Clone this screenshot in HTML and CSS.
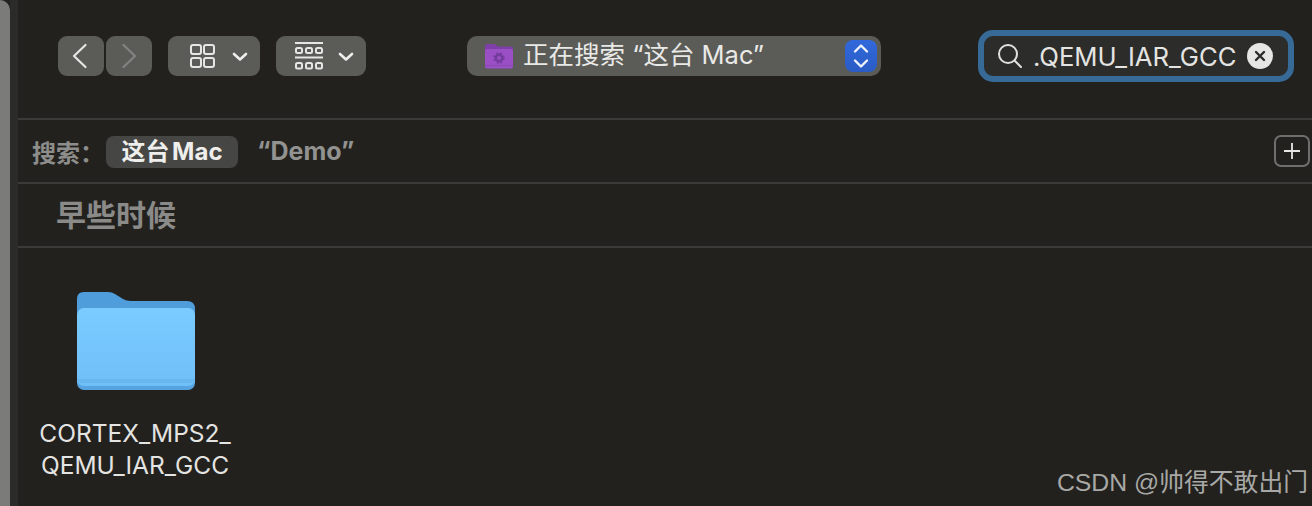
FILE: index.html
```html
<!DOCTYPE html>
<html lang="zh-CN">
<head>
<meta charset="utf-8">
<title>正在搜索 “这台 Mac”</title>
<link rel="stylesheet" href="styles.css">
</head>
<body>
<div class="window">
  <div class="edge"></div>
  <div class="gutter"></div>
  <main class="main">
    <header class="toolbar">
      <div class="nav">
        <button class="btn nav-btn"><svg class="back" width="18" height="26" viewBox="0 0 18 26"><path d="M14.500 2 L3 13 L14.500 24" fill="none" stroke="#e6e6e4" stroke-width="2.200" stroke-linecap="round" stroke-linejoin="round"/></svg></button>
        <button class="btn nav-btn"><svg width="18" height="26" viewBox="0 0 18 26"><path d="M3.500 2 L15 13 L3.500 24" fill="none" stroke="#838381" stroke-width="2.200" stroke-linecap="round" stroke-linejoin="round"/></svg></button>
      </div>
      <button class="btn view-btn">
        <svg class="grid-icon" width="26" height="26" viewBox="0 0 26 26"><g fill="none" stroke="#e6e6e4" stroke-width="2"><rect x="2" y="2" width="10" height="9" rx="2"/><rect x="15" y="2" width="10" height="9" rx="2"/><rect x="2" y="15" width="10" height="9" rx="2"/><rect x="15" y="15" width="10" height="9" rx="2"/></g></svg>
        <svg class="chev" width="16" height="10" viewBox="0 0 16 10"><path d="M2 2 L8 7.500 L14 2" fill="none" stroke="#eeeeec" stroke-width="2.600" stroke-linecap="round" stroke-linejoin="round"/></svg>
      </button>
      <button class="btn group-btn">
        <svg class="group-icon" width="29" height="28" viewBox="0 0 29 28"><g fill="none" stroke="#e6e6e4" stroke-width="2"><path d="M0 1 H28M0 15.500 H28"/><rect x="1" y="6" width="6" height="5" rx="1.500"/><rect x="11" y="6" width="6" height="5" rx="1.500"/><rect x="21" y="6" width="6" height="5" rx="1.500"/><rect x="1" y="21" width="6" height="5.500" rx="1.500"/><rect x="11" y="21" width="6" height="5.500" rx="1.500"/><rect x="21" y="21" width="6" height="5.500" rx="1.500"/></g></svg>
        <svg class="chev" width="16" height="10" viewBox="0 0 16 10"><path d="M2 2 L8 7.500 L14 2" fill="none" stroke="#eeeeec" stroke-width="2.600" stroke-linecap="round" stroke-linejoin="round"/></svg>
      </button>
      <div class="popup">
        <svg class="smart-folder" width="30" height="26" viewBox="0 0 30 26">
          <path d="M1 3 Q1 1 3 1 H10 Q11.500 1 13 2.500 L14 3.500 H27 Q29 3.500 29 5.500 V12 H1 Z" fill="#7e3fa8"/>
          <rect x="1" y="6" width="28" height="19.500" rx="2" fill="#9a4fc4"/>
          <rect x="1" y="22" width="28" height="1" fill="#8a48b4"/>
          <circle cx="15" cy="15" r="3.200" fill="none" stroke="#713a9b" stroke-width="2.400"/>
          <circle cx="15" cy="15" r="5" fill="none" stroke="#713a9b" stroke-width="1.400" stroke-dasharray="2 2"/>
        </svg>
        <span class="popup-label">正在搜索 “这台 Mac”</span>
        <span class="stepper">
          <svg width="18" height="30" viewBox="0 0 18 30"><g fill="none" stroke="#eef2fb" stroke-width="2.400" stroke-linecap="round" stroke-linejoin="round"><path d="M3 10.500 L9 4.500 L15 10.500"/><path d="M3 19.500 L9 25.500 L15 19.500"/></g></svg>
        </span>
      </div>
      <div class="search">
        <svg class="glass" width="26" height="26" viewBox="0 0 26 26"><g fill="none" stroke="#e0e0de" stroke-width="2"><circle cx="11" cy="11" r="9"/><path d="M17.500 17.500 L24 24" stroke-linecap="round"/></g></svg>
        <span class="search-text">.QEMU_IAR_GCC</span>
        <span class="clear"><svg width="12" height="12" viewBox="0 0 12 12"><path d="M2 2 L10 10M10 2 L2 10" stroke="#2b2b29" stroke-width="2.400" stroke-linecap="round"/></svg></span>
      </div>
    </header>
    <section class="scope">
      <span class="scope-label">搜索：</span>
      <span class="scope-on">这台 Mac</span>
      <span class="scope-off">“Demo”</span>
      <span class="add"><svg width="18" height="18" viewBox="0 0 18 18"><path d="M9 1 V17M1 9 H17" stroke="#e6e6e4" stroke-width="1.800"/></svg></span>
    </section>
    <section class="heading">早些时候</section>
    <section class="results">
      <figure class="item">
        <svg class="folder" width="120" height="100" viewBox="0 0 120 100">
          <defs>
            <linearGradient id="folderFace" x1="0" y1="0" x2="0" y2="1">
              <stop offset="0" stop-color="#7acbff"/>
              <stop offset="1" stop-color="#70c0f8"/>
            </linearGradient>
          </defs>
          <path d="M1 8 Q1 1 8 1 H32 Q36 1 39 3 L47 8 Q50 10 55 10 H111 Q119 10 119 18 V40 H1 Z" fill="#509ddc"/>
          <rect x="1" y="17" width="118" height="82" rx="7" fill="#55a3e0"/>
          <rect x="1" y="17" width="118" height="78" rx="7" fill="url(#folderFace)"/>
          <rect x="1" y="88" width="118" height="4" fill="#68b7f0"/>
        </svg>
        <figcaption class="name">CORTEX_MPS2_<br>QEMU_IAR_GCC</figcaption>
      </figure>
    </section>
  </main>
</div>
<div class="watermark">CSDN @帅得不敢出门</div>
</body>
</html>
```
FILE: styles.css
```css
* { box-sizing: border-box; }
html, body { margin: 0; height: 100%; overflow: hidden; background: #22211e; }
body {
  position: relative;
  font-family: Inter, "Noto Sans CJK SC", "Liberation Sans", sans-serif;
}
.window { display: flex; height: 506px; width: 1312px; }
.edge { width: 10px; background: #7b7b79; border-top-right-radius: 10px; }
.gutter { width: 8px; background: #2b2b29; }
.main { flex: 1; min-width: 0; display: flex; flex-direction: column; background: #22211e; }

.toolbar {
  height: 120px;
  flex: none;
  display: flex;
  align-items: flex-start;
  padding: 36px 0 0 40px;
  border-bottom: 2px solid #3a3a38;
}
.btn {
  height: 40px;
  padding: 0;
  border: 0;
  border-radius: 9px;
  background: #5b5c57;
  display: flex;
  align-items: center;
}
.nav { display: flex; gap: 2px; }
.nav-btn { width: 46px; justify-content: center; }
.back { margin-right: 2px; }
.view-btn { width: 92px; margin-left: 16px; padding-left: 21px; }
.group-btn { width: 90px; margin-left: 16px; padding-left: 19px; }
.view-btn .chev { margin-left: 17px; margin-top: 2px; }
.group-btn .chev { margin-left: 14px; margin-top: 2px; }

.popup {
  width: 414px;
  height: 40px;
  margin-left: 101px;
  border-radius: 10px;
  background: #5b5c57;
  display: flex;
  align-items: center;
  padding: 0 4px 0 17px;
}
.popup-label {
  margin-left: 9px;
  margin-top: -2px;
  color: #e9e9e7;
  font-size: 25.5px;
  line-height: 36px;
  white-space: nowrap;
}
.stepper {
  margin-left: auto;
  width: 32px;
  height: 32px;
  border-radius: 8px;
  background: linear-gradient(#3168dc, #2a5cc4);
  display: flex;
  align-items: center;
  justify-content: center;
}

.search {
  width: 316px;
  height: 52px;
  margin: -6px 0 0 97px;
  border: 6px solid #386a98;
  border-radius: 15px;
  background: #2c2c2a;
  display: flex;
  align-items: center;
  padding-left: 13px;
}
.glass { flex: none; }
.search-text {
  margin-left: 10px;
  margin-top: 1px;
  color: #e4e4e2;
  font-size: 25.7px;
  white-space: nowrap;
}
.clear {
  margin-left: auto;
  margin-right: 15px;
  width: 26px;
  height: 26px;
  border-radius: 50%;
  background: #e6e6e4;
  display: flex;
  align-items: center;
  justify-content: center;
  flex: none;
}

.scope {
  height: 64px;
  flex: none;
  display: flex;
  align-items: center;
  border-bottom: 2px solid #3a3a38;
  padding: 2px 2px 0 14px;
}
.scope-label { color: #8d8d8b; font-size: 24px; font-weight: 700; width: 74px; white-space: nowrap; margin-top: -2px; }
.scope-on {
  width: 132px;
  height: 32px;
  border-radius: 8px;
  background: #464644;
  color: #eeeeec;
  font-size: 24px;
  font-weight: 700;
  word-spacing: -3px;
  line-height: 31px;
  text-align: center;
  white-space: nowrap;
}
.scope-off { margin-left: 19px; margin-top: -2px; color: #929290; font-size: 25px; font-weight: 700; white-space: nowrap; }
.add {
  margin-left: auto;
  margin-top: -2px;
  width: 36px;
  height: 32px;
  border: 2px solid #6e6e6c;
  border-radius: 7px;
  display: flex;
  align-items: center;
  justify-content: center;
}

.heading {
  height: 64px;
  flex: none;
  border-bottom: 2px solid #3a3a38;
  padding-left: 38px;
  color: #8a8a88;
  font-size: 30px;
  font-weight: 700;
  line-height: 62px;
}

.results { flex: 1; padding: 43px 0 0 20px; }
.item { margin: 0; width: 194px; display: flex; flex-direction: column; align-items: center; }
.folder { margin-left: 2px; }
.name {
  margin-top: 26px;
  color: #e4e4e2;
  font-size: 24.5px;
  line-height: 32px;
  text-align: center;
  white-space: nowrap;
}

.watermark {
  position: absolute;
  right: 4px;
  bottom: 6px;
  color: #a8a8a6;
  font-family: "Liberation Sans", "Noto Sans CJK SC", sans-serif;
  font-size: 24.8px;
  line-height: 34px;
  white-space: nowrap;
}
```
